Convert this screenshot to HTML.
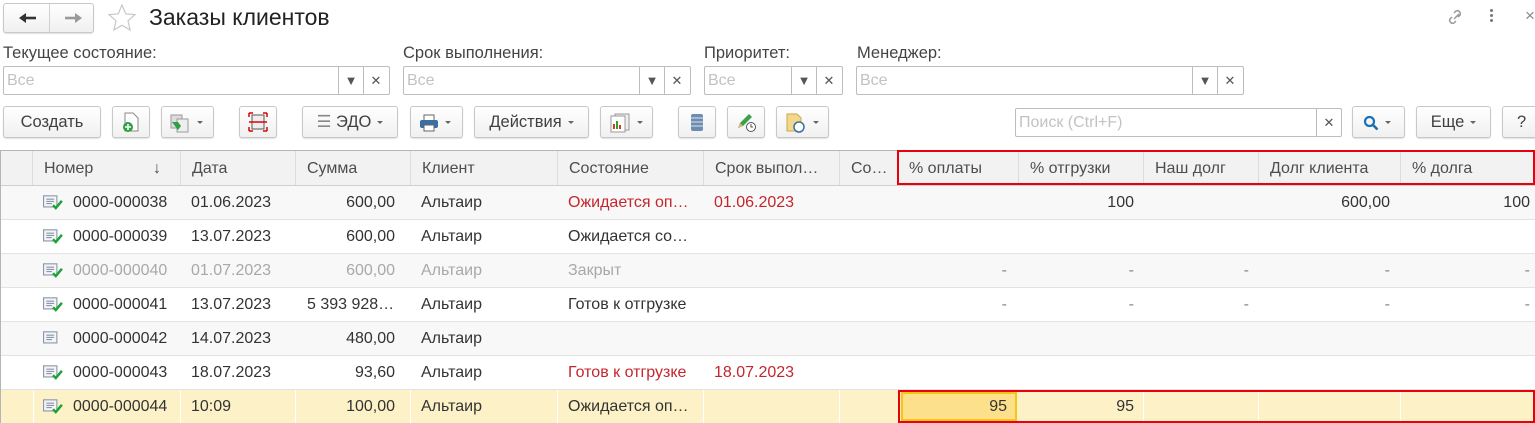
<!DOCTYPE html>
<html><head><meta charset="utf-8">
<style>
*{box-sizing:border-box;margin:0;padding:0}
body{width:1535px;height:423px;overflow:hidden;background:#fff;font-family:"Liberation Sans",Arial,sans-serif;font-size:16px;color:#333;position:relative}
.a{position:absolute}
.btn{position:absolute;border:1px solid #c8c8c8;border-radius:3px;background:linear-gradient(#fff,#f0f0f0);box-shadow:0 1px 1px rgba(0,0,0,.12);height:32px;top:106px;font-size:16.5px;color:#404040;line-height:30px;text-align:center}
.dd{display:inline-block;width:0;height:0;border-left:3px solid transparent;border-right:3px solid transparent;border-top:3px solid #666;vertical-align:middle;margin-left:6px}
.inp{position:absolute;top:66px;height:29px;border:1px solid #bdbdbd;border-radius:2px;background:#fff;color:#c2c2c2;line-height:27px;padding-left:3px}
.inp .s1,.inp .s2{position:absolute;top:0;height:27px;border-left:1px solid #bdbdbd;width:25px;text-align:center;color:#555;font-size:13px}
.lbl{position:absolute;top:44px;color:#444;font-size:16.5px}
.row{position:absolute;left:1px;width:1534px;height:34px;border-bottom:1px solid #e3e3e3}
.c{position:absolute;top:0;height:33px;line-height:33px;white-space:nowrap;overflow:hidden}
.r{text-align:right}
.hd{position:absolute;top:151px;height:35px;line-height:35px;color:#4d4d4d;border-right:1px solid #dcdcdc;padding-left:11px;background:#f2f2f2;white-space:nowrap}
.ic{position:absolute;left:42px;top:9px;width:20px;height:15px}
</style></head><body>

<!-- nav -->
<div class="a" style="left:3px;top:3px;width:91px;height:30px;border:1px solid #c8c8c8;border-radius:3px;background:linear-gradient(#fff,#f0f0f0);box-shadow:0 1px 1px rgba(0,0,0,.12)">
 <div class="a" style="left:45px;top:0;width:1px;height:28px;background:#d0d0d0"></div>
 <svg class="a" style="left:15px;top:8px" width="18" height="12"><path d="M2 6h15" stroke="#333" stroke-width="2.6"/><path d="M0 6l7-5v10z" fill="#333"/></svg>
 <svg class="a" style="left:60px;top:8px" width="18" height="12"><path d="M1 6h15" stroke="#999" stroke-width="2.6"/><path d="M18 6l-7-5v10z" fill="#999"/></svg>
</div>
<svg class="a" style="left:107px;top:3px" width="30" height="30"><path d="M15 2l3.8 8.8 9.2.8-7 6.2 2.1 9.2L15 22.2 6.9 27l2.1-9.2-7-6.2 9.2-.8z" fill="none" stroke="#c8c8c8" stroke-width="1.2"/></svg>
<div class="a" style="left:149px;top:4px;font-size:23px;color:#222">Заказы клиентов</div>
<svg class="a" style="left:1445px;top:7px" width="22" height="20"><path d="M9 12l5-5M7 10l-2 2a3 3 0 004 4l2-2M13 10l2-2a3 3 0 00-4-4l-2 2" stroke="#999" stroke-width="1.5" fill="none"/></svg>
<div class="a" style="left:1490px;top:9px;width:3px;height:3px;background:#777;border-radius:50%;box-shadow:0 5px 0 #777,0 10px 0 #777"></div>
<div class="a" style="left:1525px;top:6px;color:#888;font-size:17px">×</div>

<!-- filters -->
<div class="lbl" style="left:3px">Текущее состояние:</div>
<div class="lbl" style="left:403px">Срок выполнения:</div>
<div class="lbl" style="left:704px">Приоритет:</div>
<div class="lbl" style="left:857px">Менеджер:</div>
<div class="inp" style="left:3px;width:387px">Все<div class="s1" style="left:334px">▼</div><div class="s2" style="left:359px">✕</div></div>
<div class="inp" style="left:403px;width:288px">Все<div class="s1" style="left:235px">▼</div><div class="s2" style="left:260px">✕</div></div>
<div class="inp" style="left:704px;width:139px">Все<div class="s1" style="left:86px">▼</div><div class="s2" style="left:111px">✕</div></div>
<div class="inp" style="left:856px;width:388px">Все<div class="s1" style="left:335px">▼</div><div class="s2" style="left:360px">✕</div></div>

<!-- toolbar -->
<div class="btn" style="left:3px;width:98px">Создать</div>
<div class="btn" style="left:112px;width:38px"><svg style="margin-top:5px" width="18" height="20"><path d="M3 1h8l5 5v13H3z" fill="#fff" stroke="#888"/><circle cx="6" cy="15" r="5" fill="#2ea043"/><path d="M6 12v6M3 15h6" stroke="#fff" stroke-width="1.6"/></svg></div>
<div class="btn" style="left:161px;width:53px;text-align:left;padding-left:7px"><svg style="vertical-align:middle" width="22" height="20"><rect x="2" y="2" width="11" height="13" fill="#ddd" stroke="#999"/><rect x="8" y="6" width="11" height="13" fill="#eee" stroke="#999"/><path d="M3 9h6l3 4-3 4" fill="#2ea043"/></svg><span class="dd"></span></div>
<div class="btn" style="left:239px;width:38px"><svg style="margin-top:5px" width="20" height="20"><rect x="4" y="3" width="12" height="14" fill="#eee" stroke="#555"/><path d="M1 10h18" stroke="#d00" stroke-width="1.5"/><path d="M1 1h4M1 1v4M19 1h-4M19 1v4M1 19h4M1 19v-4M19 19h-4M19 19v-4" stroke="#d00" stroke-width="1.5"/></svg></div>
<div class="btn" style="left:302px;width:96px"><span style="color:#888">☰</span> ЭДО<span class="dd"></span></div>
<div class="btn" style="left:410px;width:53px;text-align:left;padding-left:8px"><svg style="vertical-align:middle" width="20" height="18"><rect x="5" y="1" width="10" height="6" fill="#fff" stroke="#666"/><rect x="1" y="6" width="18" height="8" rx="2" fill="#3b6ea5"/><rect x="5" y="11" width="10" height="6" fill="#fff" stroke="#666"/></svg><span class="dd"></span></div>
<div class="btn" style="left:474px;width:115px">Действия<span class="dd"></span></div>
<div class="btn" style="left:600px;width:53px;text-align:left;padding-left:8px"><svg style="vertical-align:middle" width="22" height="20"><rect x="6" y="1" width="14" height="16" fill="#eee" stroke="#999"/><rect x="2" y="3" width="14" height="16" fill="#fff" stroke="#999"/><path d="M5 16v-5M11 16v-4" stroke-width="2" stroke="#d33"/><path d="M8 16v-8" stroke="#2a2" stroke-width="2"/></svg><span class="dd"></span></div>
<div class="btn" style="left:678px;width:38px"><svg style="margin-top:6px" width="14" height="19"><rect x="1" y="1" width="12" height="17" rx="2" fill="#6c8cb0"/><path d="M1 5h12M1 9h12M1 13h12" stroke="#dbe4ee"/></svg></div>
<div class="btn" style="left:727px;width:38px"><svg style="margin-top:5px" width="22" height="20"><path d="M3 16l2-5 9-9 3 3-9 9z" fill="#3aa34a"/><path d="M3 16l2-5 3 3z" fill="#d9b37a"/><circle cx="16" cy="15" r="4.5" fill="#fff" stroke="#555"/><path d="M16 12v3h2" stroke="#555" fill="none"/></svg></div>
<div class="btn" style="left:776px;width:53px;text-align:left;padding-left:8px"><svg style="vertical-align:middle" width="22" height="20"><path d="M2 1h10l4 4v13H2z" fill="#f4d88a" stroke="#c9a94e"/><circle cx="14" cy="14" r="5" fill="#fff" stroke="#3b6ea5" stroke-width="1.5"/></svg><span class="dd"></span></div>

<div class="a" style="left:1015px;top:108px;width:327px;height:29px;border:1px solid #bdbdbd;border-radius:2px;color:#c2c2c2;line-height:27px;padding-left:3px">Поиск (Ctrl+F)<div class="a" style="left:300px;top:0;width:25px;height:27px;border-left:1px solid #bdbdbd;text-align:center;color:#555;font-size:13px">✕</div></div>
<div class="btn" style="left:1352px;width:53px;text-align:left;padding-left:10px"><svg style="vertical-align:middle" width="16" height="16"><circle cx="6.5" cy="6.5" r="4.5" fill="none" stroke="#1f6fb5" stroke-width="2.2"/><path d="M10 10l4.5 4.5" stroke="#1f6fb5" stroke-width="2.6"/></svg><span class="dd"></span></div>
<div class="btn" style="left:1416px;width:75px">Еще<span class="dd"></span></div>
<div class="btn" style="left:1502px;width:38px;text-align:left;padding-left:14px">?</div>

<!-- table -->
<div class="a" style="left:0;top:150px;width:1535px;height:273px;border-left:1px solid #b5b5b5;border-top:1px solid #b5b5b5"></div>
<div class="hd" style="left:1px;width:32px"></div>
<div class="hd" style="left:33px;width:148px">Номер<span style="position:absolute;left:120px">↓</span></div>
<div class="hd" style="left:181px;width:115px">Дата</div>
<div class="hd" style="left:296px;width:115px">Сумма</div>
<div class="hd" style="left:411px;width:147px">Клиент</div>
<div class="hd" style="left:558px;width:146px">Состояние</div>
<div class="hd" style="left:704px;width:136px">Срок выпол…</div>
<div class="hd" style="left:840px;width:58px">Со…</div>
<div class="hd" style="left:898px;width:121px">% оплаты</div>
<div class="hd" style="left:1019px;width:125px">% отгрузки</div>
<div class="hd" style="left:1144px;width:115px">Наш долг</div>
<div class="hd" style="left:1259px;width:142px">Долг клиента</div>
<div class="hd" style="left:1401px;width:134px">% долга</div>
<div class="a" style="left:1px;top:185px;width:1534px;height:1px;background:#cfcfcf"></div>
<div class="a" style="left:897px;top:150px;width:638px;height:35px;border:2px solid #e8000b"></div>

<div class="row" style="top:186px;background:#f8f8f8">
 <svg class="ic" viewBox="0 0 18 13"><rect x="0.5" y="0.5" width="12" height="10" fill="#f2f4f7" stroke="#8b97a8"/><path d="M3 3.5h7M3 5.5h7M3 7.5h5" stroke="#8b97a8"/><path d="M9 9l2.5 2.5L17 5" stroke="#1aa336" stroke-width="2.2" fill="none"/></svg>
 <div class="c" style="left:72px">0000-000038</div><div class="c" style="left:190px">01.06.2023</div><div class="c r" style="left:295px;width:99px">600,00</div><div class="c" style="left:420px">Альтаир</div>
 <div class="c" style="left:567px;color:#c4262e">Ожидается оп…</div><div class="c" style="left:713px;color:#c4262e">01.06.2023</div>
 <div class="c r" style="left:1018px;width:115px">100</div><div class="c r" style="left:1258px;width:131px">600,00</div><div class="c r" style="left:1400px;width:129px">100</div>
</div>
<div class="row" style="top:220px;background:#fff">
 <svg class="ic" viewBox="0 0 18 13"><rect x="0.5" y="0.5" width="12" height="10" fill="#f2f4f7" stroke="#8b97a8"/><path d="M3 3.5h7M3 5.5h7M3 7.5h5" stroke="#8b97a8"/><path d="M9 9l2.5 2.5L17 5" stroke="#1aa336" stroke-width="2.2" fill="none"/></svg>
 <div class="c" style="left:72px">0000-000039</div><div class="c" style="left:190px">13.07.2023</div><div class="c r" style="left:295px;width:99px">600,00</div><div class="c" style="left:420px">Альтаир</div>
 <div class="c" style="left:567px">Ожидается со…</div>
</div>
<div class="row" style="top:254px;background:#f8f8f8;color:#a8a8a8">
 <svg class="ic" viewBox="0 0 18 13"><rect x="0.5" y="0.5" width="12" height="10" fill="#f2f4f7" stroke="#8b97a8"/><path d="M3 3.5h7M3 5.5h7M3 7.5h5" stroke="#8b97a8"/><path d="M9 9l2.5 2.5L17 5" stroke="#1aa336" stroke-width="2.2" fill="none"/></svg>
 <div class="c" style="left:72px">0000-000040</div><div class="c" style="left:190px">01.07.2023</div><div class="c r" style="left:295px;width:99px">600,00</div><div class="c" style="left:420px">Альтаир</div>
 <div class="c" style="left:567px">Закрыт</div>
 <div class="c r" style="left:897px;width:109px;color:#888">-</div><div class="c r" style="left:1018px;width:115px;color:#888">-</div><div class="c r" style="left:1143px;width:105px;color:#888">-</div><div class="c r" style="left:1258px;width:131px;color:#888">-</div><div class="c r" style="left:1400px;width:129px;color:#888">-</div>
</div>
<div class="row" style="top:288px;background:#fff">
 <svg class="ic" viewBox="0 0 18 13"><rect x="0.5" y="0.5" width="12" height="10" fill="#f2f4f7" stroke="#8b97a8"/><path d="M3 3.5h7M3 5.5h7M3 7.5h5" stroke="#8b97a8"/><path d="M9 9l2.5 2.5L17 5" stroke="#1aa336" stroke-width="2.2" fill="none"/></svg>
 <div class="c" style="left:72px">0000-000041</div><div class="c" style="left:190px">13.07.2023</div><div class="c" style="left:306px">5 393 928…</div><div class="c" style="left:420px">Альтаир</div>
 <div class="c" style="left:567px">Готов к отгрузке</div>
 <div class="c r" style="left:897px;width:109px;color:#888">-</div><div class="c r" style="left:1018px;width:115px;color:#888">-</div><div class="c r" style="left:1143px;width:105px;color:#888">-</div><div class="c r" style="left:1258px;width:131px;color:#888">-</div><div class="c r" style="left:1400px;width:129px;color:#888">-</div>
</div>
<div class="row" style="top:322px;background:#f8f8f8">
 <svg class="ic" viewBox="0 0 18 13"><rect x="0.5" y="0.5" width="12" height="10" fill="#f2f4f7" stroke="#8b97a8"/><path d="M3 3.5h7M3 5.5h7M3 7.5h5" stroke="#8b97a8"/></svg>
 <div class="c" style="left:72px">0000-000042</div><div class="c" style="left:190px">14.07.2023</div><div class="c r" style="left:295px;width:99px">480,00</div><div class="c" style="left:420px">Альтаир</div>
</div>
<div class="row" style="top:356px;background:#fff">
 <svg class="ic" viewBox="0 0 18 13"><rect x="0.5" y="0.5" width="12" height="10" fill="#f2f4f7" stroke="#8b97a8"/><path d="M3 3.5h7M3 5.5h7M3 7.5h5" stroke="#8b97a8"/><path d="M9 9l2.5 2.5L17 5" stroke="#1aa336" stroke-width="2.2" fill="none"/></svg>
 <div class="c" style="left:72px">0000-000043</div><div class="c" style="left:190px">18.07.2023</div><div class="c r" style="left:295px;width:99px">93,60</div><div class="c" style="left:420px">Альтаир</div>
 <div class="c" style="left:567px;color:#c4262e">Готов к отгрузке</div><div class="c" style="left:713px;color:#c4262e">18.07.2023</div>
</div>
<div class="row" style="top:390px;height:33px;background:#fdf1c7;border-bottom:none">
 <div class="a" style="left:32px;top:0;width:1px;height:33px;background:#fff"></div>
 <div class="a" style="left:179px;top:0;width:1px;height:33px;background:#fff"></div>
 <div class="a" style="left:294px;top:0;width:1px;height:33px;background:#fff"></div>
 <div class="a" style="left:409px;top:0;width:1px;height:33px;background:#fff"></div>
 <div class="a" style="left:556px;top:0;width:1px;height:33px;background:#fff"></div>
 <div class="a" style="left:702px;top:0;width:1px;height:33px;background:#fff"></div>
 <div class="a" style="left:838px;top:0;width:1px;height:33px;background:#fff"></div>
 <div class="a" style="left:1142px;top:0;width:1px;height:33px;background:#fff"></div>
 <div class="a" style="left:1257px;top:0;width:1px;height:33px;background:#fff"></div>
 <div class="a" style="left:1399px;top:0;width:1px;height:33px;background:#fff"></div>
 <div class="a" style="left:900px;top:2px;width:116px;height:29px;background:#fde08c;border:2px solid #f5c518"></div>
 <svg class="ic" viewBox="0 0 18 13"><rect x="0.5" y="0.5" width="12" height="10" fill="#f2f4f7" stroke="#8b97a8"/><path d="M3 3.5h7M3 5.5h7M3 7.5h5" stroke="#8b97a8"/><path d="M9 9l2.5 2.5L17 5" stroke="#1aa336" stroke-width="2.2" fill="none"/></svg>
 <div class="c" style="left:72px">0000-000044</div><div class="c" style="left:190px">10:09</div><div class="c r" style="left:295px;width:99px">100,00</div><div class="c" style="left:420px">Альтаир</div>
 <div class="c" style="left:567px">Ожидается оп…</div>
 <div class="c r" style="left:897px;width:109px">95</div><div class="c r" style="left:1018px;width:115px">95</div>
</div>
<div class="a" style="left:898px;top:390px;width:637px;height:33px;border:2px solid #e8000b"></div>
</body></html>
